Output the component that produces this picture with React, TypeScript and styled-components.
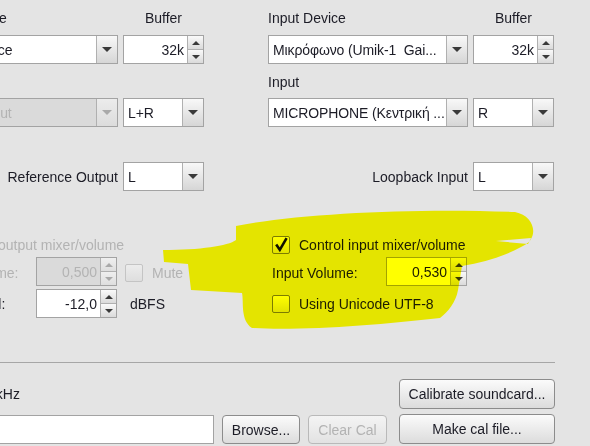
import React from 'react';
import styled, { createGlobalStyle, css } from 'styled-components';

const GlobalStyle = createGlobalStyle`
  html, body {
    margin: 0;
    padding: 0;
    background: #e4e4e4;
  }
  body {
    font-family: "Liberation Sans", Arial, sans-serif;
    font-size: 14px;
    color: #1c1c26;
  }
`;

const Screen = styled.div`
  position: relative;
  width: 590px;
  height: 446px;
  overflow: hidden;
  background: #e4e4e4;
`;

// the dialog continues past the left edge of the shot
const Sheet = styled.div`
  margin-left: -82px;
  width: 637px;
  padding-top: 10px;
`;

const Columns = styled.div`
  display: flex;
  gap: 64px;
`;

const Panel = styled.section`
  width: 286px;
`;

const DeviceGrid = styled.div`
  display: grid;
  grid-template-columns: 200px 81px;
  grid-template-rows: 25px 39px 24px 64px 29px;
  column-gap: 5px;
  align-items: start;
`;

const Label = styled.div<{ $align?: 'left' | 'center' | 'right'; $disabled?: boolean }>`
  line-height: 16px;
  white-space: nowrap;
  text-align: ${(p) => p.$align || 'left'};
  color: ${(p) => (p.$disabled ? '#b3b3b3' : 'inherit')};
  align-self: center;
`;

const TopLabel = styled(Label)`
  align-self: start;
`;

const fieldBox = css`
  box-sizing: border-box;
  height: 29px;
  border: 1px solid #a3a3a3;
  display: flex;
  align-items: stretch;
`;

const ComboBox = styled.div<{ $disabled?: boolean }>`
  ${fieldBox};
  background: ${(p) => (p.$disabled ? '#dadada' : '#fff')};
  color: ${(p) => (p.$disabled ? '#b3b3b3' : 'inherit')};
`;

const ComboText = styled.span`
  flex: 1;
  min-width: 0;
  padding-left: 4px;
  letter-spacing: -0.12px;
  display: flex;
  align-items: center;
  white-space: pre;
  overflow: hidden;
`;

const ArrowButton = styled.span<{ $disabled?: boolean }>`
  width: 20px;
  border-left: 1px solid #b0b0b0;
  background: ${(p) =>
    p.$disabled ? 'linear-gradient(#ececec, #dcdcdc)' : 'linear-gradient(#f8f8f8, #d6d6d6)'};
  display: flex;
  align-items: center;
  justify-content: center;
`;

const Triangle = styled.span<{ $up?: boolean; $size: number; $disabled?: boolean }>`
  width: 0;
  height: 0;
  border-left: ${(p) => p.$size}px solid transparent;
  border-right: ${(p) => p.$size}px solid transparent;
  ${(p) =>
    p.$up
      ? `border-bottom: ${Math.round(p.$size * 0.9)}px solid ${p.$disabled ? '#a9a9a9' : '#3a3a3a'};`
      : `border-top: ${Math.round(p.$size * 0.9)}px solid ${p.$disabled ? '#a9a9a9' : '#3a3a3a'};`}
`;

const SpinBox = styled.div<{ $disabled?: boolean }>`
  ${fieldBox};
  background: ${(p) => (p.$disabled ? '#dadada' : '#fff')};
  color: ${(p) => (p.$disabled ? '#b3b3b3' : 'inherit')};
`;

const SpinText = styled.span`
  flex: 1;
  padding-right: 3px;
  display: flex;
  align-items: center;
  justify-content: flex-end;
`;

const SpinButtons = styled.span`
  width: 15px;
  border-left: 1px solid #b0b0b0;
  display: flex;
  flex-direction: column;
`;

const SpinHalf = styled.span<{ $disabled?: boolean }>`
  flex: 1;
  display: flex;
  align-items: center;
  justify-content: center;
  background: ${(p) =>
    p.$disabled ? 'linear-gradient(#efefef, #dedede)' : 'linear-gradient(#fafafa, #dadada)'};
  & + & {
    border-top: 1px solid #b0b0b0;
  }
`;

const MixerGrid = styled.div`
  margin-top: 41px;
  padding-left: 4px;
  display: grid;
  grid-template-columns: 106px 81px auto;
  grid-template-rows: 25px 32px 29px;
  column-gap: 8px;
  align-items: start;
`;

const CheckRow = styled.label<{ $disabled?: boolean; $span?: number }>`
  display: flex;
  align-items: center;
  gap: 9px;
  white-space: nowrap;
  grid-column: span ${(p) => p.$span || 1};
  color: ${(p) => (p.$disabled ? '#b3b3b3' : 'inherit')};
  align-self: center;
`;

const CheckBox = styled.span<{ $disabled?: boolean }>`
  box-sizing: border-box;
  width: 18px;
  height: 18px;
  flex: none;
  border: 1px solid ${(p) => (p.$disabled ? '#c4c4c4' : '#7c7c7c')};
  border-radius: 2px;
  background: ${(p) =>
    p.$disabled ? 'linear-gradient(#ececec, #dedede)' : 'linear-gradient(#ffffff, #e2e2e2)'};
  display: flex;
  align-items: center;
  justify-content: center;
`;

const Unit = styled.span`
  align-self: center;
  padding-left: 5px;
`;

const Separator = styled.hr`
  margin: 44px 0 0;
  border: none;
  border-top: 1px solid #a6a6a6;
  height: 0;
`;

const BottomGrid = styled.div`
  margin-top: 16px;
  display: grid;
  grid-template-columns: 1fr 78px 79px 160px;
  grid-template-rows: 30px 30px;
  column-gap: 8px;
  row-gap: 5px;
`;

const RateLabel = styled(Label)`
  grid-column: 1 / 4;
  padding-left: 21px;
`;

const PathField = styled.div`
  box-sizing: border-box;
  height: 29px;
  align-self: end;
  background: #fff;
  border: 1px solid #a3a3a3;
`;

const Button = styled.button<{ $wide?: boolean }>`
  box-sizing: border-box;
  height: ${(p) => (p.$wide ? 30 : 29)}px;
  width: ${(p) => (p.$wide ? '156px' : '100%')};
  justify-self: end;
  align-self: end;
  padding: 0;
  font: inherit;
  color: #1c1c26;
  border: 1px solid #8c8c8c;
  border-radius: 4px;
  background: linear-gradient(#fbfbfb, #dcdcdc);
  white-space: nowrap;
  &:disabled {
    color: #b3b3b3;
    border-color: #b9b9b9;
    background: linear-gradient(#f4f4f4, #e2e2e2);
  }
`;

const Highlight = styled.svg`
  position: absolute;
  left: 0;
  top: 0;
  pointer-events: none;
  mix-blend-mode: multiply;
`;

function Combo({ value, disabled }: { value: string; disabled?: boolean }) {
  return (
    <ComboBox $disabled={disabled}>
      <ComboText>{value}</ComboText>
      <ArrowButton $disabled={disabled}>
        <Triangle $size={5} $disabled={disabled} />
      </ArrowButton>
    </ComboBox>
  );
}

function Spinner({ value, disabled }: { value: string; disabled?: boolean }) {
  return (
    <SpinBox $disabled={disabled}>
      <SpinText>{value}</SpinText>
      <SpinButtons>
        <SpinHalf $disabled={disabled}>
          <Triangle $up $size={4} $disabled={disabled} />
        </SpinHalf>
        <SpinHalf $disabled={disabled}>
          <Triangle $size={4} $disabled={disabled} />
        </SpinHalf>
      </SpinButtons>
    </SpinBox>
  );
}

function Check({
  label,
  checked,
  disabled,
  span,
}: {
  label: string;
  checked?: boolean;
  disabled?: boolean;
  span?: number;
}) {
  return (
    <CheckRow $disabled={disabled} $span={span}>
      <CheckBox $disabled={disabled}>
        {checked && (
          <svg width="15" height="15" viewBox="0 0 15 15">
            <path d="M2.2 7.6 L5.8 12.8 L12.6 1.2" fill="none" stroke="#111" strokeWidth="2.6" />
          </svg>
        )}
      </CheckBox>
      {label}
    </CheckRow>
  );
}

export default function App() {
  return (
    <Screen>
      <GlobalStyle />
      <Sheet>
        <Columns>
          <Panel>
            <DeviceGrid>
              <TopLabel>Output Device</TopLabel>
              <TopLabel $align="center">Buffer</TopLabel>
              <Combo value="Default Device" />
              <Spinner value="32k" />
              <TopLabel>Output</TopLabel>
              <span />
              <Combo value="Default Output" disabled />
              <Combo value="L+R" />
              <Label $align="right">Reference Output</Label>
              <Combo value="L" />
            </DeviceGrid>
            <MixerGrid>
              <Check label="Control output mixer/volume" disabled span={3} />
              <Label $disabled>Output Volume:</Label>
              <Spinner value="0,500" disabled />
              <Check label="Mute" disabled />
              <Label>Output Level:</Label>
              <Spinner value="-12,0" />
              <Unit>dBFS</Unit>
            </MixerGrid>
          </Panel>
          <Panel>
            <DeviceGrid>
              <TopLabel>Input Device</TopLabel>
              <TopLabel $align="center">Buffer</TopLabel>
              <Combo value="Μικρόφωνο (Umik-1  Gai..." />
              <Spinner value="32k" />
              <TopLabel>Input</TopLabel>
              <span />
              <Combo value="MICROPHONE (Κεντρική ..." />
              <Combo value="R" />
              <Label $align="right">Loopback Input</Label>
              <Combo value="L" />
            </DeviceGrid>
            <MixerGrid>
              <Check label="Control input mixer/volume" checked span={3} />
              <Label>Input Volume:</Label>
              <Spinner value="0,530" />
              <span />
              <Check label="Using Unicode UTF-8" span={3} />
            </MixerGrid>
          </Panel>
        </Columns>
        <Separator />
        <BottomGrid>
          <RateLabel>Rate: 48 kHz</RateLabel>
          <Button $wide>Calibrate soundcard...</Button>
          <PathField />
          <Button>Browse...</Button>
          <Button disabled>Clear Cal</Button>
          <Button $wide>Make cal file...</Button>
        </BottomGrid>
      </Sheet>
      <Highlight width="590" height="446" viewBox="0 0 590 446">
        <path
          fillRule="evenodd"
          d="M236 226 C300 213 420 208 515 212 C536 216 540 240 521 247 C505 256 485 262 462 266
             L458 290 C456 302 448 312 440 318 C380 325 300 331 252 328 C240 320 244 302 242 293
             L191 290 L188 264 L164 262 L163 250 C200 250 228 246 236 240 Z
             M531 238 L496 241 L528 244 Z"
          fill="#ffff00"
        />
      </Highlight>
    </Screen>
  );
}
